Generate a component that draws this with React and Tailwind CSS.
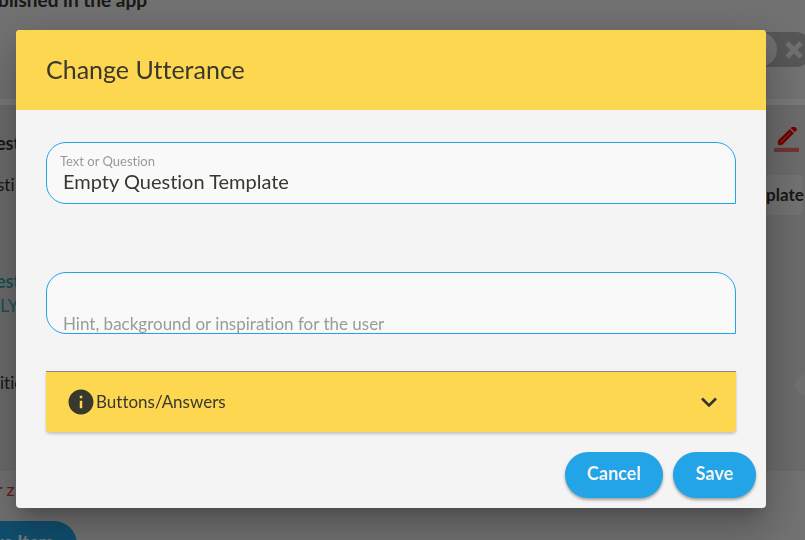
import { useState } from 'react';
import { MdInfo } from 'react-icons/md';

const fieldClasses = 'block h-[62px] overflow-hidden rounded-t-[20px] rounded-bl-[20px] border border-[#22a4e7] bg-[#f9f9f9]';
const buttonClasses = 'h-[46px] rounded-full bg-[#22a4e7] pb-1 text-[18px] font-bold text-[#f4f4f4] shadow-[0_2px_3px_rgba(0,0,0,0.35)]';

// Red pencil with a pale bar underneath
function EditIcon() {
  return (
    <svg viewBox="0 0 24 24" className="block size-[25px] fill-[#f00000]">
      <g transform="translate(1 -4)">
        <path d="M14.06 6.19 3 17.25V21h3.75L17.81 9.94z" opacity="0.5" />
        <path stroke="#f00000" strokeWidth="0.3" d="M14.06 9.02l.92.92L5.92 19H5v-.92l9.06-9.06M17.66 3c-.25 0-.51.1-.7.29l-1.83 1.83 3.75 3.75 1.83-1.83c.39-.39.39-1.02 0-1.41l-2.34-2.34c-.2-.2-.45-.29-.71-.29zm-3.6 3.19L3 17.25V21h3.75L17.81 9.94l-3.75-3.75z" />
      </g>
      <path d="M0 20h24v4H0z" opacity="0.5" />
    </svg>
  );
}

function PageBehind() {
  return (
    <div className="flex h-screen flex-col overflow-hidden bg-[#ececec] text-[18px] leading-6 text-[#33332c]">
      {/* Title and switch */}
      <div className="flex h-[99px] shrink-0 justify-between">
        <div className="-mt-3 flex h-6 w-[147px] justify-end whitespace-nowrap text-[19px] font-bold">published in the app</div>
        <div className="-mr-2 mt-8 flex h-[35px] w-20 items-center justify-end gap-2 rounded-full bg-[#b4b4b4] pr-2.5">
          <span className="size-[35px] rounded-full bg-[#e8e8e8]" />
          <svg viewBox="0 0 18 18" className="size-[18px] stroke-[#e8e8e8] stroke-[5]">
            <path d="M2 2l14 14M16 2L2 16" />
          </svg>
        </div>
      </div>
      <div className="h-1.5 shrink-0 bg-[#fafafa]" />

      {/* Question card */}
      <div className="flex h-[366px] shrink-0 justify-between bg-[#dedede]">
        <div className="-ml-1 w-8 whitespace-nowrap pt-[26px]">
          <div className="font-bold">est</div>
          <div className="-ml-2 mt-[18px] text-[17px]">esti</div>
          <div className="mt-[72px] font-bold text-[#2fa9b5]">est</div>
          <div className="ml-1 text-[#2fa9b5]">LY</div>
          <div className="ml-1 mt-[54px] text-[17px]">itio</div>
        </div>
        <div className="flex w-[45px] flex-col pt-[22px]">
          <div className="ml-3.5"><EditIcon /></div>
          <div className="mr-0.5 mt-[23px] h-10 rounded-r bg-[#ececec] pl-1.5 pt-2 text-[17px] font-bold">plate</div>
          <div className="-mr-2.5 mt-[160px] size-5 self-end rounded-full bg-[#e8e8e8]" />
        </div>
      </div>

      <div className="-ml-1 flex h-[50px] shrink-0 gap-1 pt-1.5 text-[18px] text-[#e0323c]"><span>r</span><span>z</span></div>
      <button className="-ml-12 h-[46px] w-[125px] shrink-0 rounded-full bg-[#22a4e7] pb-1 text-[18px] font-bold text-white">Save Item</button>
    </div>
  );
}

export default function App() {
  const [text, setText] = useState('Empty Question Template');
  const [hint, setHint] = useState('');
  const [open, setOpen] = useState(false);

  return (
    <div className="relative overflow-hidden font-['Lato','Open_Sans',sans-serif] [font-variant-ligatures:none]">
      <PageBehind />
      <div className="fixed inset-0 bg-black/52 pl-4 pr-[39px] pt-[30px]">
        <div role="dialog" aria-labelledby="dialog-title"
          className="overflow-hidden rounded-[4px] bg-[#f4f4f4] text-[#38382f] shadow-[0_11px_15px_-7px_rgba(0,0,0,0.2),0_24px_38px_3px_rgba(0,0,0,0.14),0_9px_46px_8px_rgba(0,0,0,0.12)]">
          <h2 id="dialog-title" className="flex h-20 items-center bg-[#fcd74f] px-[30px] text-[25px]">Change Utterance</h2>

          <div className="px-[30px] pt-8">
            <label className={fieldClasses}>
              <span className="block pl-[13px] pt-2.5 text-[13px] leading-4 text-[#9a9a9a]">Text or Question</span>
              <input value={text} onChange={(e) => setText(e.target.value)}
                className="block h-6 w-full px-4 text-[20px] outline-none" />
            </label>
            <label className={`mt-[68px] pt-[39px] ${fieldClasses}`}>
              <input value={hint} onChange={(e) => setHint(e.target.value)} placeholder="Hint, background or inspiration for the user"
                aria-label="Hint" className="block h-6 w-full px-4 text-[17px] outline-none placeholder:text-[#9a9a9a]" />
            </label>

            <button onClick={() => setOpen(!open)} aria-expanded={open}
              className="mt-[37px] flex h-[61px] w-full items-center rounded-b-[4px] border-t border-[#888] bg-[#fcd74f] pl-5 pr-[18px] text-[17px] shadow-[0_2px_3px_rgba(0,0,0,0.2)]">
              <MdInfo className="size-[30px]" />
              <span className="flex-1 text-left">Buttons/Answers</span>
              <svg viewBox="0 0 18 12" className="h-3 w-[18px] fill-none stroke-[#33332c] stroke-[2.6]">
                <path d="M2 2.5l7 7 7-7" />
              </svg>
            </button>
          </div>

          <div className="flex justify-end gap-2.5 px-2.5 pb-2.5 pt-5">
            <button className={`w-[98px] ${buttonClasses}`}>Cancel</button>
            <button className={`w-[83px] ${buttonClasses}`}>Save</button>
          </div>
        </div>
      </div>
    </div>
  );
}
